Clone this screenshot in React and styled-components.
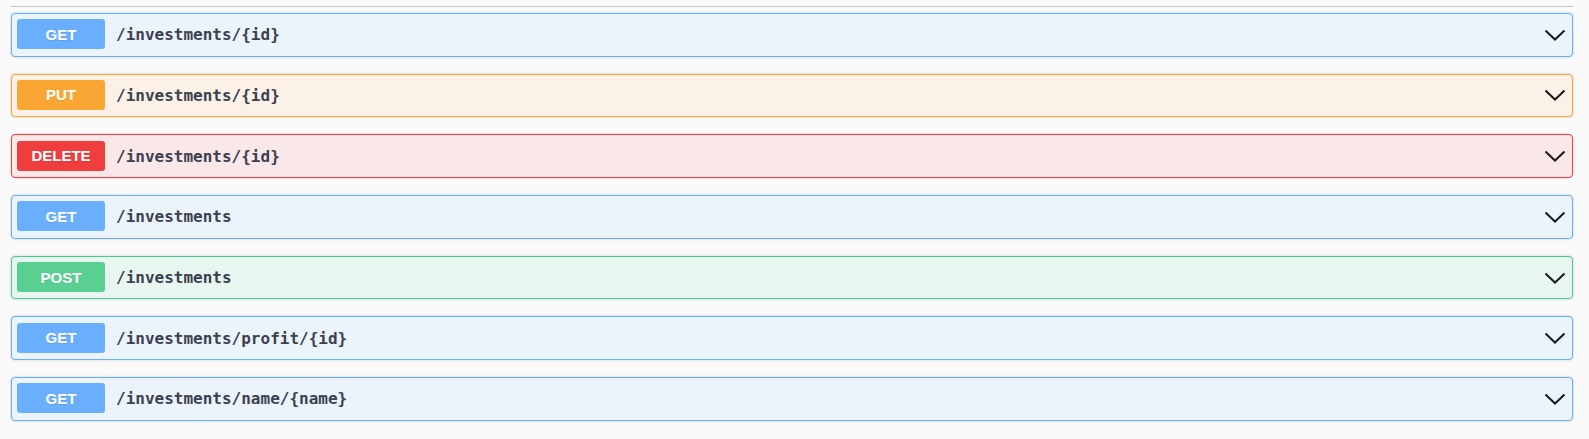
import styled, { createGlobalStyle } from 'styled-components';

const GlobalStyle = createGlobalStyle`
    html, body {
        margin: 0;
        padding: 0;
        background: #fafafa;
    }
`;

const colors = {
    GET: { main: '#6aaffe', border: '#61affe', bg: '#ebf3fb' },
    PUT: { main: '#f9a634', border: '#fca130', bg: '#fbf1e6' },
    DELETE: { main: '#f03d3d', border: '#f93e3e', bg: '#fae7e7' },
    POST: { main: '#5acf92', border: '#49cc90', bg: '#e8f6f0' },
};

const Wrapper = styled.div`
    padding: 0 16px 0 11px;
    font-family: "Liberation Sans", Arial, sans-serif;
`;

const Divider = styled.div`
    height: 6px;
    border-bottom: 1px solid #c4c6cb;
    margin-bottom: 6px;
`;

const OpBlock = styled.div`
    display: flex;
    align-items: center;
    height: 41.5px;
    padding: 0 5px;
    margin-bottom: 17.2px;
    border: 1px solid ${({ method }) => colors[method].border};
    background-color: ${({ method }) => colors[method].bg};
    border-radius: 4px;
    box-shadow: 0 0 3px rgba(0, 0, 0, 0.19);
    cursor: pointer;
`;

const Method = styled.span`
    min-width: 88px;
    height: 30px;
    margin-top: -1px;
    display: flex;
    align-items: center;
    justify-content: center;
    border-radius: 3px;
    background-color: ${({ method }) => colors[method].main};
    color: #fff;
    font-size: 15px;
    font-weight: 700;
    text-shadow: 0 1px 0 rgba(0, 0, 0, 0.1);
`;

const Path = styled.span`
    flex: 1;
    padding: 0 11px;
    font-family: "DejaVu Sans Mono", "Liberation Mono", monospace;
    font-size: 16px;
    font-weight: 700;
    color: #3b4151;
`;

const Arrow = styled.svg`
    width: 22px;
    height: 20px;
    margin-right: 1px;
`;

const operations = [
    { method: 'GET', path: '/investments/{id}' },
    { method: 'PUT', path: '/investments/{id}' },
    { method: 'DELETE', path: '/investments/{id}' },
    { method: 'GET', path: '/investments' },
    { method: 'POST', path: '/investments' },
    { method: 'GET', path: '/investments/profit/{id}' },
    { method: 'GET', path: '/investments/name/{name}' },
];

const App = () => {
    return (
        <Wrapper>
            <GlobalStyle />
            <Divider />
            {operations.map((op, index) => (
                <OpBlock key={index} method={op.method}>
                    <Method method={op.method}>{op.method}</Method>
                    <Path>{op.path}</Path>
                    <Arrow viewBox="0 0 22 20">
                        <path
                            d="M1.5 5.5 L11 14.5 L20.5 5.5"
                            fill="none"
                            stroke="#1b1b1b"
                            strokeWidth="2"
                        />
                    </Arrow>
                </OpBlock>
            ))}
        </Wrapper>
    );
};

export default App;
